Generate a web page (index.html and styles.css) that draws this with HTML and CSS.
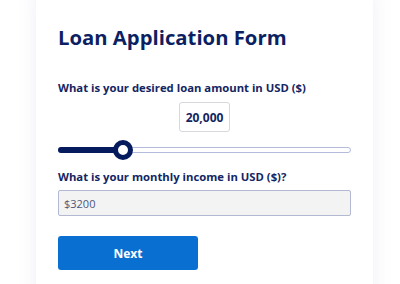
FILE: index.html
```html
<!DOCTYPE html>
<html>
<head>
<meta charset="utf-8">
<link rel="stylesheet" href="styles.css">
</head>
<body>
<div class="page">
  <div class="card">
    <h1 class="title">Loan Application Form</h1>
    <label class="label label-first">What is your desired loan amount in USD ($)</label>
    <div class="amount-row">
      <div class="amount-box">20,000</div>
    </div>
    <div class="slider">
      <div class="track"></div>
      <div class="fill" style="width: 20%"></div>
      <div class="thumb" style="left: calc(20% * 273 / 293)"></div>
    </div>
    <label class="label label-second">What is your monthly income in USD ($)?</label>
    <div class="text-input">$3200</div>
    <button class="btn">Next</button>
  </div>
</div>
</body>
</html>
```
FILE: styles.css
```css
html, body {
  margin: 0;
  padding: 0;
  background: #ffffff;
  font-family: "Open Sans", "Noto Sans", sans-serif;
}
.page {
  padding-left: 36px;
  height: 284px;
  overflow: hidden;
}
.card {
  width: 337px;
  box-sizing: border-box;
  padding: 22px 22px 40px;
  background: #ffffff;
  box-shadow: 0 0 18px rgba(120, 120, 190, 0.12);
  min-height: 320px;
  margin-top: -10px;
}
.title {
  margin: 0;
  padding-top: 11px;
  font-size: 20.3px;
  line-height: 28px;
  font-weight: 700;
  color: #0c1f63;
}
.label {
  display: block;
  font-size: 11.3px;
  line-height: 15px;
  font-weight: 700;
  color: #132562;
}
.label-first {
  margin-top: 29px;
}
.amount-row {
  display: flex;
  justify-content: center;
  margin-top: 7px;
}
.amount-box {
  width: 51px;
  height: 30px;
  box-sizing: border-box;
  border: 1px solid #d6d8de;
  border-radius: 3px;
  display: flex;
  align-items: center;
  justify-content: center;
  font-size: 12px;
  font-weight: 700;
  color: #132562;
}
.slider {
  position: relative;
  height: 20px;
  margin-top: 8px;
}
.track {
  position: absolute;
  left: 0;
  right: 0;
  top: 7px;
  height: 6px;
  box-sizing: border-box;
  border: 1px solid #b3badb;
  border-radius: 3px;
  background: #ffffff;
}
.fill {
  position: absolute;
  left: 0;
  top: 7px;
  height: 6px;
  border-radius: 3px;
  background: #061b5e;
}
.thumb {
  position: absolute;
  top: 0;
  width: 20px;
  height: 20px;
  box-sizing: border-box;
  border: 5px solid #061b5e;
  border-radius: 50%;
  background: #ffffff;
}
.label-second {
  margin-top: 9px;
}
.text-input {
  margin-top: 6px;
  height: 26px;
  box-sizing: border-box;
  border: 1px solid #b3b8d3;
  border-radius: 2px;
  background: #f3f3f4;
  padding-left: 5px;
  display: flex;
  align-items: center;
  font-size: 11px;
  color: #4e5778;
}
.btn {
  display: block;
  margin-top: 20px;
  width: 140px;
  height: 34px;
  border: none;
  border-radius: 3px;
  background: #0970d2;
  color: #ffffff;
  font-family: "Open Sans", "Noto Sans", sans-serif;
  font-size: 12px;
  font-weight: 700;
}
```
